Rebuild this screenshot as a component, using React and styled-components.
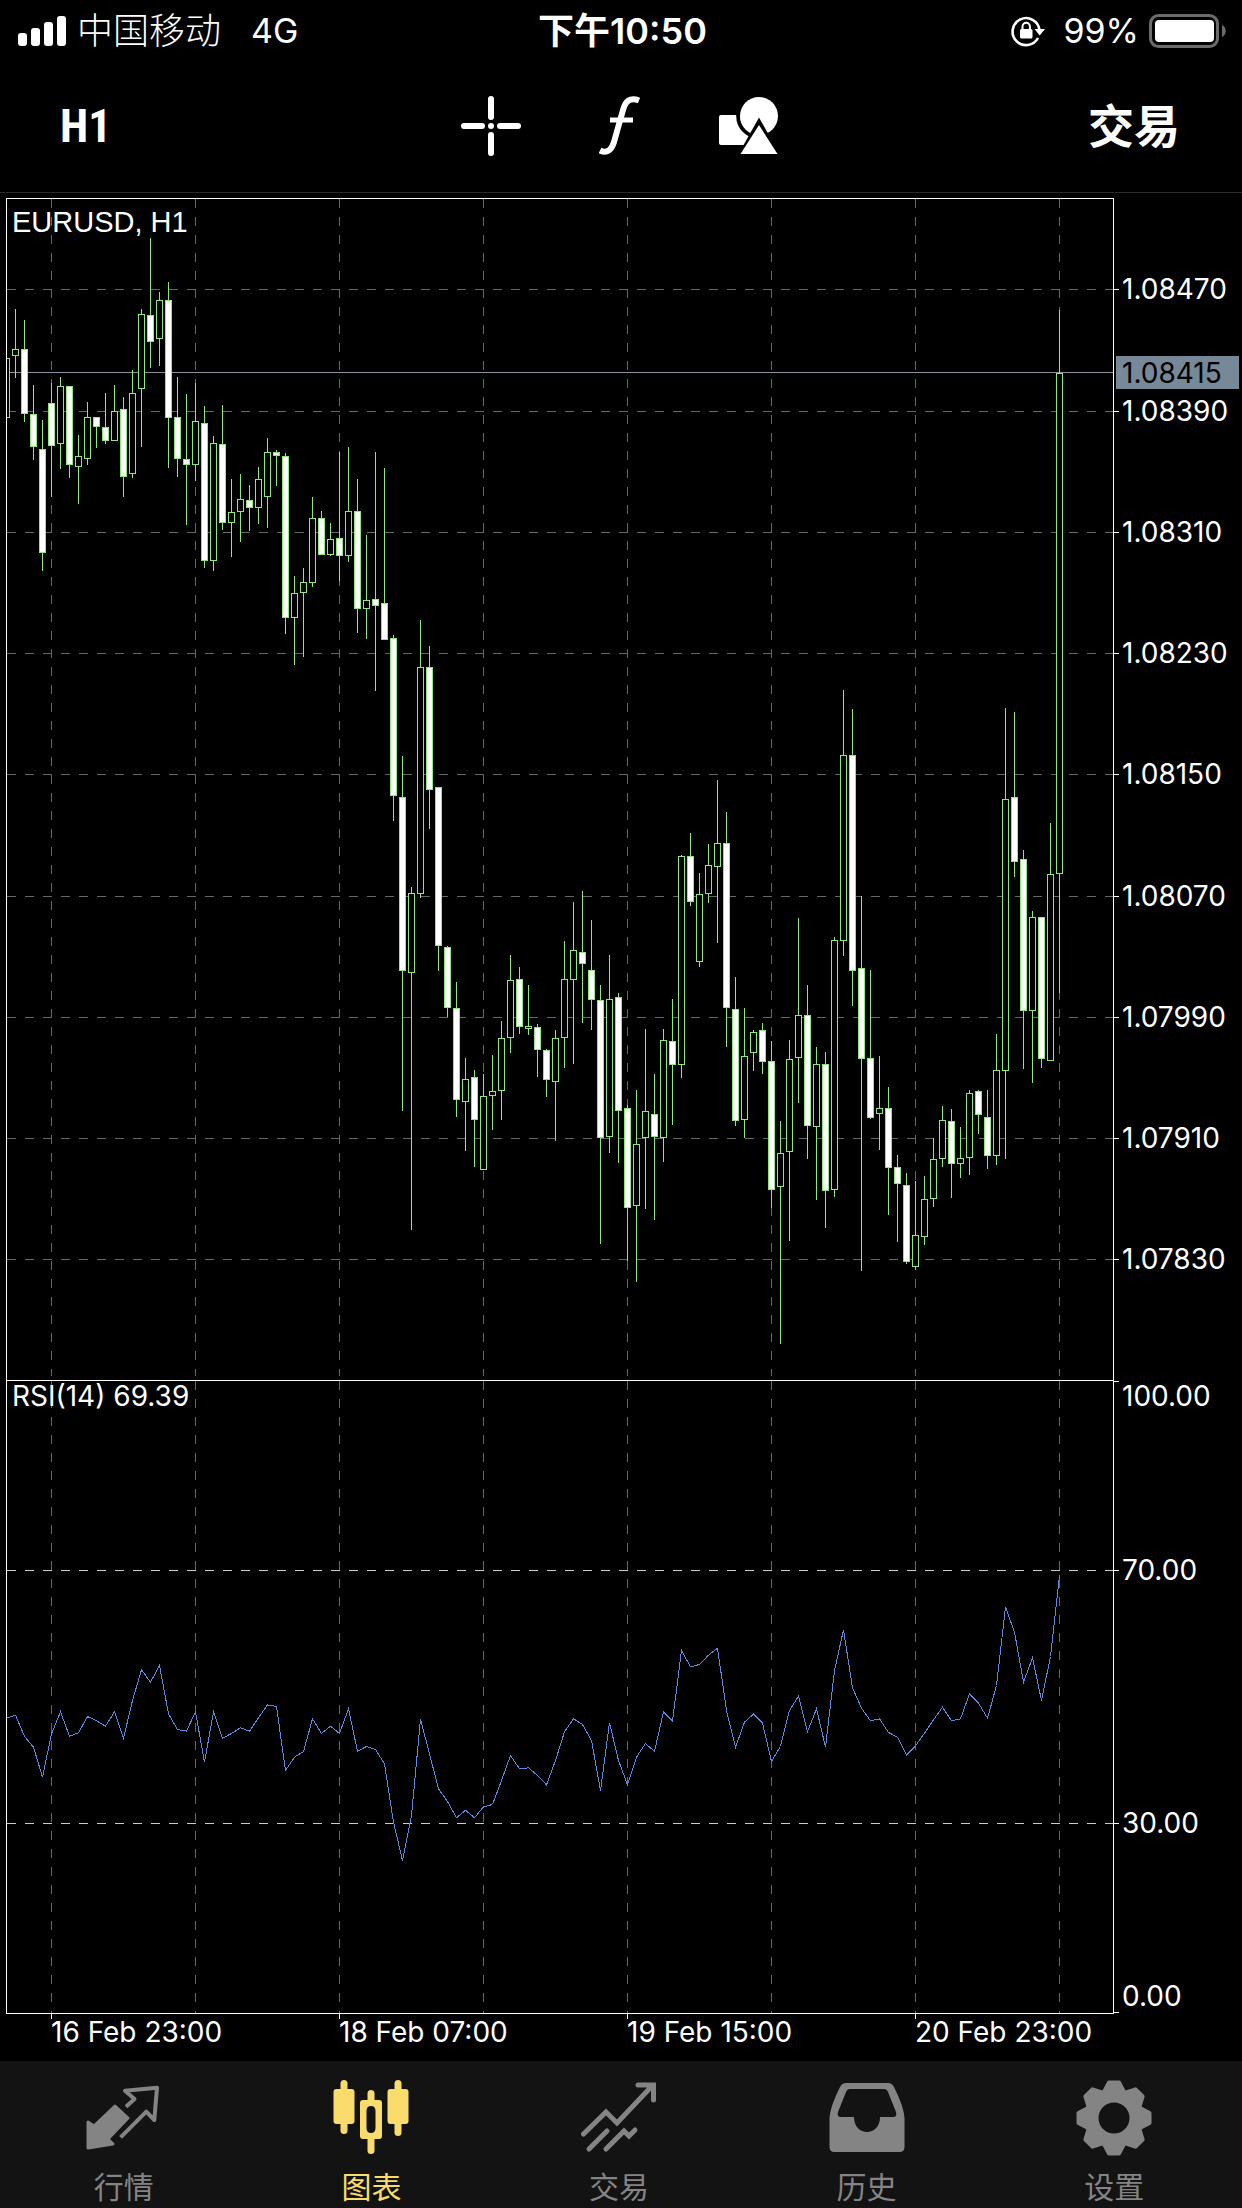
import styled, { createGlobalStyle } from "styled-components"

const GlobalStyle = createGlobalStyle`
    *{
        box-sizing:border-box;
    }
    body{
        margin:0;
        background-color:black;
        color:white;
        font-family:Inter,"Noto Sans CJK SC",sans-serif;
    }
`
const Page = styled.div`
    min-height:100vh;
    display:flex;
    flex-direction:column;
`
const StatusBar = styled.div`
    height:62px;
    padding:0px 15px 0px 18px;
    display:grid;
    grid-template-columns:1fr auto 1fr;
    align-items:center;
    font-size:34px;
    line-height:40px;
`
const StatusGroup = styled.div`
    display:flex;
    align-items:center;
    justify-content:${props => props.$end ? "flex-end" : "flex-start"};
    gap:10px;
`
const Carrier = styled.span`
    font-size:36px;
    margin-right:20px;
    font-weight:300;
`
const Clock = styled.time`
    font-size:36px;
    font-weight:600;
`
const LockSvg = styled.svg`
    margin-right:8px;
`
const Toolbar = styled.header`
    height:131px;
    padding:0px 62px 2px 60px;
    border-bottom:1px solid #2a2a2a;
    display:grid;
    grid-template-columns:1fr auto 1fr;
    align-items:center;
`
const Tools = styled.div`
    display:flex;
    gap:69px;
`
const ToolButton = styled.button`
    width:60px;
    height:60px;
    padding:0px;
    border:none;
    background:none;
    color:white;
    display:flex;
    align-items:center;
    justify-content:center;
    cursor:pointer;
`
const TextButton = styled.button`
    padding:0px;
    border:none;
    background:none;
    color:white;
    font-family:${props => props.$narrow ? '"Liberation Sans Narrow","Roboto Condensed",Roboto,sans-serif' : 'Inter,"Noto Sans CJK SC",sans-serif'};
    font-size:46px;
    font-weight:700;
    line-height:60px;
    justify-self:${props => props.$end ? "end" : "start"};
    cursor:pointer;
`
const Chart = styled.main`
    display:flex;
    flex-direction:column;
`
const Pane = styled.svg`
    display:block;
    width:100%;
    height:auto;
`
const AxisText = styled.text`
    font-family:Inter,sans-serif;
    font-size:28px;
    fill:${props => props.$dark ? "black" : "white"};
`
const SymbolText = styled.text`
    font-family:"Liberation Sans",sans-serif;
    font-size:29px;
    fill:white;
`
const TabBar = styled.nav`
    flex:1;
    min-height:147px;
    padding-right:4px;
    background-color:#131313;
    display:grid;
    grid-template-columns:repeat(5,1fr);
`
const Tab = styled.a`
    padding-top:19px;
    display:flex;
    flex-direction:column;
    align-items:center;
    gap:11px;
    color:${props => props.$active ? "#f9dc6c" : "#848484"};
    font-size:30px;
    line-height:40px;
    text-decoration:none;
`

const GREEN = "#90e878"
const STEP = 9
const LEFT = 6
const RIGHT = 1113
const barX = (i) => LEFT + i * STEP

// high, body top, body bottom, low, 1 = falling bar
const bars = [
  [358, 358, 417, 417, 0], [309, 349, 355, 377, 0], [320, 349, 413, 421, 1], [385, 414, 446, 459, 1],
  [420, 449, 552, 570, 1], [383, 403, 445, 496, 1], [377, 386, 443, 468, 0], [386, 386, 464, 477, 1],
  [435, 456, 466, 503, 0], [402, 417, 458, 464, 0], [417, 417, 426, 447, 1], [393, 427, 440, 443, 1],
  [385, 411, 440, 440, 0], [397, 409, 476, 496, 1], [370, 393, 473, 477, 0], [309, 314, 388, 446, 0],
  [238, 315, 341, 367, 1], [292, 300, 338, 365, 0], [282, 300, 417, 467, 1], [377, 417, 458, 476, 1],
  [394, 459, 464, 524, 1], [383, 421, 464, 480, 0], [406, 423, 560, 567, 1], [436, 443, 560, 570, 0],
  [405, 444, 522, 529, 1], [479, 512, 522, 556, 0], [474, 499, 511, 541, 0], [485, 500, 507, 530, 1],
  [467, 479, 507, 523, 0], [438, 452, 496, 527, 0], [450, 452, 455, 485, 1], [453, 456, 617, 633, 1],
  [576, 593, 617, 664, 0], [568, 582, 592, 656, 0], [497, 518, 582, 586, 0], [511, 518, 554, 554, 1],
  [523, 539, 554, 555, 0], [452, 538, 555, 580, 1], [447, 511, 555, 561, 0], [479, 511, 608, 632, 1],
  [535, 600, 608, 638, 0], [452, 599, 605, 690, 1], [468, 603, 639, 639, 1], [635, 638, 795, 820, 1],
  [756, 797, 970, 1110, 1], [887, 893, 972, 1229, 0], [620, 667, 893, 897, 0], [646, 667, 789, 828, 1],
  [787, 787, 945, 970, 1], [946, 947, 1007, 1016, 1], [982, 1008, 1099, 1116, 1], [1058, 1079, 1101, 1150, 0],
  [1070, 1077, 1119, 1166, 1], [1074, 1096, 1169, 1169, 0], [1055, 1091, 1095, 1129, 0], [1021, 1038, 1090, 1119, 0],
  [955, 980, 1037, 1052, 0], [967, 979, 1026, 1033, 1], [985, 1026, 1028, 1034, 0], [1024, 1027, 1049, 1076, 1],
  [1049, 1050, 1079, 1096, 1], [1030, 1038, 1081, 1140, 0], [941, 979, 1037, 1067, 0], [902, 950, 979, 1063, 0],
  [891, 952, 963, 1022, 1], [920, 970, 999, 1029, 1], [985, 1000, 1137, 1243, 1], [955, 999, 1136, 1152, 0],
  [993, 997, 1110, 1162, 1], [1105, 1108, 1207, 1260, 1], [1090, 1144, 1205, 1281, 0], [1029, 1111, 1137, 1208, 0],
  [1074, 1114, 1136, 1219, 1], [1029, 1040, 1137, 1161, 0], [999, 1041, 1064, 1124, 1], [855, 856, 1064, 1077, 0],
  [833, 856, 901, 905, 1], [873, 894, 961, 966, 0], [844, 865, 893, 902, 0], [780, 843, 866, 942, 0],
  [812, 843, 1007, 1046, 1], [977, 1009, 1120, 1125, 1], [1008, 1056, 1119, 1137, 0], [1030, 1032, 1052, 1070, 0],
  [1023, 1030, 1061, 1073, 1], [1041, 1061, 1189, 1207, 1], [1121, 1153, 1186, 1343, 0], [1040, 1059, 1151, 1240, 0],
  [918, 1015, 1057, 1102, 0], [985, 1015, 1125, 1158, 1], [1047, 1064, 1126, 1199, 0], [1052, 1064, 1190, 1227, 1],
  [937, 940, 1189, 1196, 0], [690, 755, 940, 955, 0], [709, 755, 970, 1005, 1], [896, 968, 1058, 1270, 1],
  [970, 1058, 1117, 1118, 1], [1056, 1108, 1113, 1149, 0], [1087, 1108, 1167, 1214, 1], [1155, 1167, 1183, 1241, 1],
  [1173, 1185, 1261, 1263, 1], [1181, 1235, 1266, 1269, 0], [1176, 1199, 1236, 1244, 0], [1138, 1159, 1198, 1206, 0],
  [1106, 1120, 1158, 1166, 0], [1109, 1121, 1163, 1197, 1], [1127, 1158, 1163, 1177, 0], [1090, 1093, 1157, 1174, 0],
  [1090, 1091, 1114, 1133, 1], [1090, 1117, 1155, 1168, 1], [1034, 1070, 1155, 1164, 0], [708, 799, 1070, 1158, 0],
  [712, 797, 861, 876, 1], [850, 859, 1010, 1068, 1], [911, 917, 1010, 1082, 0], [917, 917, 1058, 1067, 1],
  [823, 874, 1060, 1060, 0], [310, 373, 873, 992, 0],
]

// thirds of a pixel below y = 1360
const rsi = [
  1073, 1064, 1128, 1160, 1250, 1120, 1054, 1127, 1117, 1068, 1081, 1097, 1054, 1133, 1020, 928, 965, 915, 1060, 1107,
  1112, 1054, 1205, 1054, 1133, 1119, 1102, 1112, 1072, 1033, 1038, 1230, 1190, 1173, 1075, 1119, 1097, 1119, 1045, 1172,
  1158, 1167, 1210, 1385, 1500, 1365, 1076, 1180, 1285, 1323, 1372, 1349, 1372, 1339, 1332, 1260, 1185, 1225, 1222, 1245,
  1273, 1200, 1114, 1075, 1092, 1140, 1290, 1087, 1200, 1273, 1190, 1149, 1173, 1054, 1082, 870, 919, 912, 884, 863,
  1050, 1160, 1085, 1061, 1088, 1203, 1158, 1050, 1007, 1113, 1045, 1160, 930, 808, 982, 1043, 1081, 1075, 1116, 1130,
  1184, 1156, 1118, 1078, 1040, 1081, 1075, 1000, 1028, 1073, 975, 740, 815, 965, 892, 1020, 888, 645,
]

const prices = [
  ["1.08470", 289], ["1.08390", 411], ["1.08310", 532], ["1.08230", 653], ["1.08150", 774],
  ["1.08070", 896], ["1.07990", 1017], ["1.07910", 1138], ["1.07830", 1259],
]
const gridBars = [5, 21, 37, 53, 69, 85, 101, 117]
const dates = [[5, "16 Feb 23:00"], [37, "18 Feb 07:00"], [69, "19 Feb 15:00"], [101, "20 Feb 23:00"]]

const Line = ({ x1, y1, x2, y2, ...rest }) => (
  <path d={`M${x1} ${y1}L${x2} ${y2}`} fill="none" {...rest} />
)

const GridColumns = ({ from, to }) => gridBars.map((i) => (
  <Line key={i} x1={barX(i) + 0.5} y1={from} x2={barX(i) + 0.5} y2={to} stroke="#666" strokeDasharray="9 9" />
))

const Bar = ({ x, data: [high, top, bottom, low, falling] }) => (
  <g>
    <rect x={x} y={high} width="1" height={low - high + 1} fill={GREEN} />
    <rect x={x - 2.5} y={top + 0.5} width="6" height={bottom - top} fill={falling ? "white" : "black"} stroke={GREEN} />
  </g>
)

const PricePane = () => (
  <Pane viewBox="0 193 1242 1183" role="img" aria-label="EURUSD, H1">
    <clipPath id="plot">
      <rect x={LEFT} y="198" width={RIGHT - LEFT} height="1178" />
    </clipPath>
    <g shapeRendering="crispEdges">
      <GridColumns from={199} to={1376} />
      {prices.map(([label, y]) => (
        <Line key={label} x1={LEFT + 1} y1={y + 0.5} x2={RIGHT} y2={y + 0.5} stroke="#666" strokeDasharray="9 9" />
      ))}
      <Line x1={LEFT} y1={372.5} x2={RIGHT} y2={372.5} stroke="#87909a" />
      <g clipPath="url(#plot)">
        {bars.map((bar, i) => <Bar key={i} x={barX(i)} data={bar} />)}
      </g>
      <path d="M6.5 1376V198.5H1113.5V1376" fill="none" stroke="white" />
      {prices.map(([label, y]) => (
        <Line key={label} x1={RIGHT} y1={y + 0.5} x2={RIGHT + 6} y2={y + 0.5} stroke="white" />
      ))}
      <rect x="1116" y="356" width="123" height="33" fill="#778899" />
    </g>
    {prices.map(([label, y]) => <AxisText key={label} x="1122" y={y + 10}>{label}</AxisText>)}
    <AxisText x="1122" y="383" $dark>1.08415</AxisText>
    <SymbolText x="12" y="232">EURUSD, H1</SymbolText>
  </Pane>
)

const RsiPane = () => (
  <Pane viewBox="0 1376 1242 685" role="img" aria-label="RSI(14)">
    <g shapeRendering="crispEdges">
      <GridColumns from={1381} to={2013} />
      {[1570.5, 1823.5].map((y) => (
        <Line key={y} x1={LEFT + 1} y1={y} x2={RIGHT} y2={y} stroke="#ccc" strokeDasharray="9 9" />
      ))}
      <polyline points={rsi.map((v, i) => `${barX(i) + 0.5},${1360.5 + v / 3}`).join(" ")} fill="none" stroke="#5b8be0" />
      <path d="M6.5 1376V2013.5H1113.5V1376M6 1380.5H1114" fill="none" stroke="white" />
      <path d="M1113 1381.5h6M1113 1570.5h6M1113 1823.5h6M1113 2012.5h6" stroke="white" />
      {dates.map(([i]) => <Line key={i} x1={barX(i) + 0.5} y1={2013} x2={barX(i) + 0.5} y2={2019} stroke="white" />)}
    </g>
    <AxisText x="12" y="1406">RSI(14) 69.39</AxisText>
    <AxisText x="1122" y="1406">100.00</AxisText>
    <AxisText x="1122" y="1580">70.00</AxisText>
    <AxisText x="1122" y="1833">30.00</AxisText>
    <AxisText x="1122" y="2006">0.00</AxisText>
    {dates.map(([i, label]) => <AxisText key={i} x={barX(i)} y="2042">{label}</AxisText>)}
  </Pane>
)

const SignalIcon = () => (
  <svg width="49" height="30" viewBox="0 0 49 30" fill="white">
    <rect x="0" y="17" width="9" height="13" rx="3" />
    <rect x="13" y="12" width="9" height="18" rx="3" />
    <rect x="26" y="6" width="9" height="24" rx="3" />
    <rect x="39" y="0" width="9" height="30" rx="3" />
  </svg>
)

const RotationLockIcon = () => (
  <LockSvg width="34" height="32" viewBox="0 0 34 32">
    <path d="M27 23A13.5 13.5 0 1 1 28.5 15" fill="none" stroke="white" strokeWidth="2.6" />
    <path d="M23.5 14H34L28.7 20.5Z" fill="white" />
    <rect x="9" y="14" width="12.5" height="9.5" rx="1.5" fill="white" />
    <path d="M11.5 15V11.5a3.7 3.7 0 0 1 7.4 0V15" fill="none" stroke="white" strokeWidth="2" />
  </LockSvg>
)

const BatteryIcon = () => (
  <svg width="78" height="34" viewBox="0 0 78 34">
    <rect x="1.5" y="1.5" width="67" height="31" rx="8" fill="none" stroke="#6b6b6b" strokeWidth="3" />
    <rect x="6" y="6" width="59" height="22" rx="4" fill="white" />
    <path d="M73 11c5 2 5 10 0 12z" fill="#6b6b6b" />
  </svg>
)

const CrosshairIcon = () => (
  <svg width="60" height="60" viewBox="0 0 60 60" stroke="white" strokeWidth="6" strokeLinecap="round">
    <path d="M30 3V21M30 39V57M3 30H21M39 30H57M30 30h.01" />
  </svg>
)

const FunctionIcon = () => (
  <svg width="60" height="60" viewBox="0 0 60 60" fill="none" stroke="white" strokeWidth="6">
    <path d="M10 54.500C17 58 21.500 54 24 46L33 14C35.500 5 40 1 49 4.500" />
    <path d="M20 24H43" strokeWidth="5" />
  </svg>
)

const ShapesIcon = () => (
  <svg width="60" height="60" viewBox="0 0 60 60" fill="white">
    <rect x="0" y="19" width="31" height="30" rx="2" />
    <circle cx="40" cy="20" r="20.8" fill="none" stroke="black" strokeWidth="4" />
    <circle cx="40" cy="20" r="19" />
    <path d="M40 21.5L15 66H65Z" fill="black" />
    <path d="M40 29L21.5 58H58.5Z" />
  </svg>
)

const QuotesIcon = () => (
  <svg width="76" height="76" viewBox="0 0 76 76" strokeLinejoin="round">
    <path d="M2 42L8 46L29 26L42 38L22 59L27 64L2 68Z" fill="currentColor" stroke="currentColor" strokeWidth="3" />
    <path d="M40 26.7L48.5 19L39 10.7L71 7.7L68.3 40L60.3 31.7L34.6 57.3" fill="none" stroke="currentColor" strokeWidth="4" />
  </svg>
)

const ChartIcon = () => (
  <svg width="76" height="76" viewBox="0 0 76 76" fill="currentColor">
    <rect x="0.5" y="9" width="21" height="35" rx="3" />
    <rect x="7.5" y="0" width="7" height="54" rx="3.5" />
    <path fillRule="evenodd" d="M30 20H46Q49 20 49 23V56Q49 59 46 59H30Q27 59 27 56V23Q27 20 30 20ZM38 26Q33.5 26 33.5 31V48Q33.5 53 38 53Q42.5 53 42.5 48V31Q42.5 26 38 26Z" />
    <path d="M34.5 21V13.5a3.5 3.5 0 0 1 7 0V21ZM34.5 58V70.5a3.5 3.5 0 0 0 7 0V58Z" />
    <rect x="54.5" y="9" width="21" height="35" rx="3" />
    <rect x="61.5" y="0" width="7" height="56" rx="3.5" />
  </svg>
)

const TradeIcon = () => (
  <svg width="76" height="76" viewBox="0 0 76 76" fill="none" stroke="currentColor" strokeWidth="5" strokeLinecap="round">
    <path d="M2.5 54L25 32L36 43L71 6M57 5H72.5V20" />
    <path d="M8 69L26 51M25 69L43 51L48 56L54 50" />
  </svg>
)

const HistoryIcon = () => (
  <svg width="76" height="76" viewBox="0 0 76 76" fill="currentColor" fillRule="evenodd">
    <path d="M17 3H59Q63 3 65 7Q75 27 75.500 38V67Q75.500 72 70.500 72H5.500Q.5 72 .5 67V38Q1 27 11 7Q13 3 17 3ZM21 9Q18 9 17 12L9 32Q7.500 37 12 37H25C25 57 51 57 51 37H64Q68.500 37 67 32L59 12Q58 9 55 9Z" />
  </svg>
)

const SettingsIcon = () => (
  <svg width="76" height="76" viewBox="-38 -38 76 76">
    <circle r="22.500" fill="none" stroke="currentColor" strokeWidth="14" />
    {[0, 45, 90, 135, 180, 225, 270, 315].map((angle) => (
      <path
        key={angle}
        d="M-10 -26L-5 -35.500H5L10 -26Z"
        transform={`rotate(${angle})`}
        fill="currentColor"
        stroke="currentColor"
        strokeWidth="4"
        strokeLinejoin="round"
      />
    ))}
  </svg>
)

const tabs = [
  { label: "行情", Icon: QuotesIcon },
  { label: "图表", Icon: ChartIcon, active: true },
  { label: "交易", Icon: TradeIcon },
  { label: "历史", Icon: HistoryIcon },
  { label: "设置", Icon: SettingsIcon },
]

const App = () => {
  return (
    <Page>
      <GlobalStyle />
      <StatusBar>
        <StatusGroup>
          <SignalIcon />
          <Carrier>中国移动</Carrier>
          <span>4G</span>
        </StatusGroup>
        <Clock>下午10:50</Clock>
        <StatusGroup $end>
          <RotationLockIcon />
          <span>99%</span>
          <BatteryIcon />
        </StatusGroup>
      </StatusBar>
      <Toolbar>
        <TextButton $narrow>H1</TextButton>
        <Tools>
          <ToolButton aria-label="十字线"><CrosshairIcon /></ToolButton>
          <ToolButton aria-label="指标"><FunctionIcon /></ToolButton>
          <ToolButton aria-label="对象"><ShapesIcon /></ToolButton>
        </Tools>
        <TextButton $end>交易</TextButton>
      </Toolbar>
      <Chart>
        <PricePane />
        <RsiPane />
      </Chart>
      <TabBar>
        {tabs.map(({ label, Icon, active }) => (
          <Tab key={label} href="#" $active={active}>
            <Icon />
            {label}
          </Tab>
        ))}
      </TabBar>
    </Page>
  )
}

export default App
